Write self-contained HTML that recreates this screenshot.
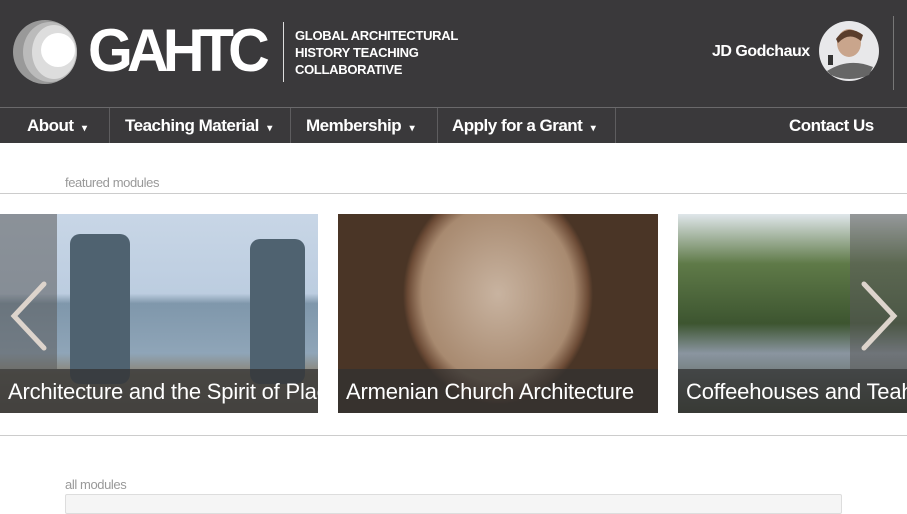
<!DOCTYPE html>
<html><head><meta charset="utf-8"><style>
*{margin:0;padding:0;box-sizing:border-box}
body{width:907px;height:504px;overflow:hidden;background:#fff;font-family:"Liberation Sans",sans-serif;position:relative}
.hdr{position:absolute;left:0;top:0;width:907px;height:143px;background:#3a393b}
.nav{position:absolute;left:0;top:107px;width:907px;height:36px;border-top:1px solid #6a696b}
.nav span{position:absolute;top:0;height:35px;line-height:36px;color:#fff;font-size:17px;font-weight:bold;letter-spacing:-0.5px}
.sep{position:absolute;top:0;width:1px;height:35px;background:#5e5d5f}
.car{position:absolute;overflow:hidden}
.ttl{position:absolute;left:0;right:0;bottom:0;height:44px;background:rgba(50,50,50,.75);color:#fff;font-size:22px;line-height:46px;padding-left:8px;white-space:nowrap;overflow:hidden;letter-spacing:-0.2px}
.lbl{position:absolute;left:65px;font-size:13px;color:#999;letter-spacing:-0.4px}
.hr{position:absolute;left:0;width:907px;height:1px;background:#ccc}
</style></head><body>
<div class="hdr">
 <svg style="position:absolute;left:12px;top:19px" width="66" height="66" viewBox="0 0 66 66">
  <circle cx="33" cy="33" r="32" fill="#999"/>
  <ellipse cx="38" cy="33" rx="27" ry="30" fill="#bbb"/>
  <ellipse cx="42" cy="33" rx="22" ry="27" fill="#ddd"/>
  <circle cx="46" cy="31" r="17" fill="#fff"/>
 </svg>
 <div style="position:absolute;left:88px;top:15px;color:#fff;font-size:60px;font-weight:bold;letter-spacing:-6px;line-height:72px;transform:scaleX(.96);transform-origin:left">GAHTC</div>
 <div style="position:absolute;left:283px;top:22px;width:1px;height:60px;background:#ddd"></div>
 <div style="position:absolute;left:295px;top:27px;color:#fff;font-size:13px;font-weight:bold;line-height:17px;letter-spacing:-0.3px">GLOBAL ARCHITECTURAL<br>HISTORY TEACHING<br>COLLABORATIVE</div>
 <div style="position:absolute;left:712px;top:43px;color:#fff;font-size:16px;font-weight:bold;letter-spacing:-0.5px">JD Godchaux</div>
 <svg style="position:absolute;left:819px;top:21px" width="60" height="60" viewBox="0 0 60 60">
  <circle cx="30" cy="30" r="30" fill="#e8e8ea"/>
  <path d="M8 50 Q30 36 54 46 L50 54 Q30 62 12 54Z" fill="#666"/>
  <ellipse cx="30" cy="22" rx="12" ry="14" fill="#c9a58c"/>
  <path d="M17 18 Q28 2 44 14 L42 20 Q30 10 19 22Z" fill="#5a3d2b"/>
  <rect x="9" y="34" width="5" height="10" fill="#333"/>
 </svg>
 <div style="position:absolute;left:893px;top:16px;width:1px;height:74px;background:#777"></div>
 <div class="nav">
  <span style="left:27px">About &nbsp;<small style="font-size:10px">▾</small></span>
  <div class="sep" style="left:109px"></div>
  <span style="left:125px">Teaching Material &nbsp;<small style="font-size:10px">▾</small></span>
  <div class="sep" style="left:290px"></div>
  <span style="left:306px">Membership &nbsp;<small style="font-size:10px">▾</small></span>
  <div class="sep" style="left:437px"></div>
  <span style="left:452px">Apply for a Grant &nbsp;<small style="font-size:10px">▾</small></span>
  <div class="sep" style="left:615px"></div>
  <span style="left:789px">Contact Us</span>
 </div>
</div>
<div class="lbl" style="top:175px">featured modules</div>
<div class="hr" style="top:193px"></div>
<div class="car" style="left:0;top:214px;width:318px;height:199px;background:linear-gradient(#c8d6e6 0,#bccde0 40%,#7f97ab 45%,#8fa5b8 70%,#8a8577 80%,#7a7266 100%)">
 <div style="position:absolute;left:70px;top:20px;width:60px;height:150px;background:#4f6270;border-radius:10px"></div>
 <div style="position:absolute;left:250px;top:25px;width:55px;height:145px;background:#4f6270;border-radius:10px"></div>
 <div class="ttl">Architecture and the Spirit of Place</div>
</div>
<div class="car" style="left:338px;top:214px;width:320px;height:199px;background:radial-gradient(ellipse 95px 110px at 160px 80px,#c8b3a0 0,#a88a70 80%,#6b4a35 95%,#4a3526 100%)">
 <div class="ttl">Armenian Church Architecture</div>
</div>
<div class="car" style="left:678px;top:214px;width:229px;height:199px;background:linear-gradient(#dfe6ea 0,#5f7a48 25%,#3d5530 55%,#8a95a0 70%,#4b5440 100%)">
 <div class="ttl">Coffeehouses and Teahouses</div>
</div>
<div style="position:absolute;left:0;top:214px;width:57px;height:155px;background:rgba(90,90,90,.55)"></div>
<div style="position:absolute;left:850px;top:214px;width:57px;height:155px;background:rgba(90,90,90,.55)"></div>
<svg style="position:absolute;left:6px;top:280px" width="44" height="72"><path d="M38 4 L8 36 L38 68" stroke="#ddd4cc" stroke-width="5" fill="none" stroke-linecap="round"/></svg>
<svg style="position:absolute;left:858px;top:280px" width="44" height="72"><path d="M6 4 L36 36 L6 68" stroke="#ddd4cc" stroke-width="5" fill="none" stroke-linecap="round"/></svg>
<div class="hr" style="top:435px"></div>
<div class="lbl" style="top:477px">all modules</div>
<div style="position:absolute;left:65px;top:494px;width:777px;height:20px;border:1px solid #ddd;background:#f5f5f5;border-radius:2px"></div>
</body></html>
